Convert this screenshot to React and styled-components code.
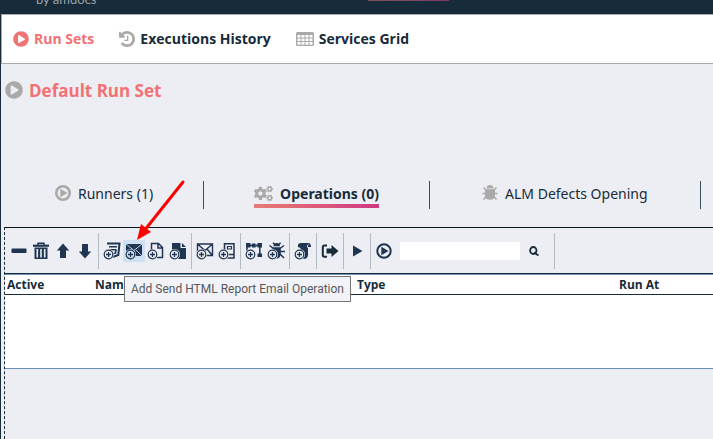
import React from "react";
import styled, { createGlobalStyle, css } from "styled-components";
import { FaPlayCircle, FaCogs } from "react-icons/fa";

const ink = "#172b3a";
const navy = "#1f3552";
const coral = "#f27173";
const haze = "#edeef3";
const grey = "#a9a9a9";

const GlobalStyle = createGlobalStyle`
  * { box-sizing: border-box; }
  body {
    margin: 0;
    background: ${haze};
    color: ${ink};
    font-family: "Open Sans", "Noto Sans", sans-serif;
  }
  button, input { font: inherit; color: inherit; border: 0; padding: 0; }
`;

const Page = styled.div`
  position: relative;
  display: flex;
  flex-direction: column;
  min-height: 100vh;
  border-left: 1px solid ${ink};
  overflow: hidden;
`;

const TopBar = styled.header`
  display: flex;
  justify-content: space-between;
  height: 14px;
  padding: 0 264px 0 35px;
  background: ${ink};
  overflow: hidden;
`;

const Byline = styled.span`
  margin-top: -9px;
  color: #9aa3a9;
  font-family: Lato, sans-serif;
  font-size: 13px;
  line-height: 16px;
`;

const ActiveMark = styled.span`
  width: 81px;
  height: 1px;
  background: linear-gradient(90deg, #81525a, #7c3a66);
`;

const MainNav = styled.nav`
  display: flex;
  align-items: center;
  gap: 25px;
  height: 50px;
  padding-left: 11px;
  background: #fff;
  border: 1px solid ${grey};
  border-right: 0;
`;

const NavLink = styled.a`
  display: flex;
  align-items: center;
  gap: 5px;
  color: ${(p) => (p.$active ? coral : ink)};
  font-size: 14px;
  font-weight: 700;
  line-height: 20px;
  text-decoration: none;
  white-space: nowrap;
  svg { color: ${(p) => (p.$active ? coral : grey)}; }
`;

const Title = styled.h1`
  display: flex;
  align-items: center;
  gap: 6px;
  height: 24px;
  margin: 14px 0 79px 4px;
  color: ${coral};
  font-size: 17px;
  font-weight: 700;
  svg { color: ${grey}; }
`;

const Tabs = styled.div`
  display: flex;
  padding-left: 4px;
`;

const Tab = styled.button`
  height: 28px;
  padding: 0 ${(p) => (p.$wide ? 52 : 50)}px;
  background: none;
  border-right: 1px solid #3b4d5b;
  font-family: "Noto Sans", sans-serif;
  font-size: 14px;
  font-weight: ${(p) => (p.$active ? 700 : 400)};
  white-space: nowrap;
  flex: none;
`;

const TabLabel = styled.span`
  display: flex;
  align-items: center;
  gap: 7px;
  height: 26px;
  border-bottom: 4px solid transparent;
  ${(p) =>
    p.$active &&
    css`
      border-image: linear-gradient(90deg, #e87d74, #cf3782) 1;
    `}
  svg { color: ${grey}; }
`;

const Panel = styled.section`
  flex: 1;
  margin: 18px 0 0 3px;
  border-left: 1px dashed ${ink};
`;

const Toolbar = styled.div`
  display: flex;
  align-items: center;
  height: 47px;
  padding-left: 3px;
  border-top: 1px solid #08151d;
  border-bottom: 1px solid ${ink};
`;

const ToolButton = styled.button`
  display: flex;
  align-items: center;
  justify-content: center;
  flex: none;
  width: 22px;
  height: 22px;
  background: ${(p) => (p.$hovered ? "#cfe0f4" : "none")};
  color: ${navy};
`;

const Divider = styled.span`
  flex: none;
  width: 1px;
  height: 36px;
  margin: 0 2px;
  background: #b3bac4;
`;

const SearchGroup = styled.div`
  display: flex;
  align-items: center;
  gap: 3px;
  padding: 0 7px 0 5px;
`;

const SearchInput = styled.input`
  width: 120px;
  height: 18px;
  padding: 0 4px;
  background: #fff;
  font-size: 12px;
`;

const GridFrame = styled.div`
  min-height: 95px;
  background: #fff;
  border-top: 1px solid #6f93bd;
  border-bottom: 1px solid #6a8db3;
`;

const Grid = styled.table`
  width: 100%;
  table-layout: fixed;
  border-spacing: 0;
`;

const HeadCell = styled.th`
  width: ${(p) => p.$width || "auto"};
  height: 20px;
  padding: 0 2px;
  border-bottom: 1px solid ${ink};
  font-size: 12px;
  line-height: 19px;
  text-align: left;
`;

const Tooltip = styled.div`
  position: absolute;
  top: 276px;
  left: 123px;
  padding: 0 6px;
  background: #f2f3f8;
  border: 1px solid #767676;
  color: #575757;
  font-family: Roboto, sans-serif;
  font-size: 12px;
  line-height: 24px;
  white-space: nowrap;
`;

const Pointer = styled.svg`
  position: absolute;
  top: 176px;
  left: 129px;
  pointer-events: none;
`;

const Svg = ({ size = 18, children }) => (
  <svg width={size} height={size} viewBox={`0 0 ${size} ${size}`} fill="currentColor" aria-hidden="true">
    {children}
  </svg>
);

const PlusBadge = ({ halo = haze }) => (
  <g>
    <circle cx="5.5" cy="12.5" r="5.5" fill={halo} />
    <circle cx="5.5" cy="12.5" r="4.3" fill={halo} stroke="currentColor" strokeWidth="1.2" />
    <path d="M5.5 10v5M3 12.5h5" stroke="currentColor" strokeWidth="1.3" />
  </g>
);

const TableIcon = () => (
  <svg width="18" height="14" viewBox="0 0 18 14" aria-hidden="true">
    <rect width="18" height="14" rx="1.500" fill="currentColor" />
    <path
      d="M1.500 3h3v2.500h-3zM5.500 3h3v2.500h-3zM9.500 3h3v2.500h-3zM13.500 3h3v2.500h-3zM1.500 6.500h3V9h-3zM5.500 6.500h3V9h-3zM9.500 6.500h3V9h-3zM13.500 6.500h3V9h-3zM1.500 10h3v2.700h-3zM5.500 10h3v2.700h-3zM9.500 10h3v2.700h-3zM13.500 10h3v2.700h-3z"
      fill="#fff"
    />
  </svg>
);

const HistoryIcon = () => (
  <svg width="16" height="16" viewBox="0 128 1536 1536" fill="currentColor" aria-hidden="true">
    <path d="M1536 896q0 156-61 298t-164 245-245 164-298 61q-172 0-327-72.500t-264-204.500q-7-10-6.500-22.500t8.500-20.500l137-138q10-9 25-9 16 2 23 12 73 95 179 147t225 52q104 0 198.500-40.500t163.500-109.500 109.500-163.500 40.500-198.500-40.500-198.500-109.500-163.500-163.500-109.500-198.500-40.500q-98 0-188 35.500t-160 101.500l137 138q31 30 14 69-17 40-59 40h-448q-26 0-45-19t-19-45v-448q0-42 40-59 39-17 69 14l130 129q107-101 244.500-156.500t284.500-55.500q156 0 298 61t245 164 164 245 61 298zm-640-288v448q0 14-9 23t-23 9h-320q-14 0-23-9t-9-23v-64q0-14 9-23t23-9h224v-352q0-14 9-23t23-9h64q14 0 23 9t9 23z" />
  </svg>
);

const BeetleIcon = () => (
  <svg width="16" height="16" viewBox="0 0 16 16" aria-hidden="true">
    <path d="M4.500 3.600a3.500 3.500 0 0 1 7 0zM3 4.200h10v6c0 3-2 4.600-5 4.600s-5-1.600-5-4.600z" fill="currentColor" />
    <path d="M1.500 2.500l3 3M14.500 2.500l-3 3M.500 8.500h15M4.500 11l-3 3.500M11.500 11l3 3.500" stroke="currentColor" strokeWidth="1.600" />
  </svg>
);

const RingPlay = ({ size = 16, weight = 2 }) => (
  <svg width={size} height={size} viewBox="0 0 16 16" aria-hidden="true">
    <circle cx="8" cy="8" r="6.700" fill="none" stroke="currentColor" strokeWidth={weight} />
    <path d="M5.300 3.800v8.400L12.500 8z" fill="currentColor" />
  </svg>
);

const icons = {
  minus: <Svg><rect x="1.500" y="6.500" width="15" height="4.500" rx=".8" /></Svg>,
  trash: (
    <Svg>
      <path d="M6 3V1.200h6V3" fill="none" stroke="currentColor" strokeWidth="1.400" />
      <path d="M1 2.600h16v2.200H1z" />
      <path d="M2.500 5.500h13V17h-13zM4.500 7v8.500h1.600V7zM8.200 7v8.500h1.600V7zM11.900 7v8.500h1.600V7z" fillRule="evenodd" />
    </Svg>
  ),
  up: <Svg><path d="M9 1.500L15.200 8.500h-3.200V16H6V8.500H2.800z" /></Svg>,
  down: <Svg><path d="M9 16.500L15.200 9.500h-3.200V2H6v7.500H2.800z" /></Svg>,
  html: (
    <Svg>
      <path d="M4 1.500h12.500L15.300 13 9.800 15" fill="none" stroke="currentColor" strokeWidth="2" />
      <path d="M6 4.700h8M6 7.800h7.500M13 7.500l-.5 3.500-3 1" fill="none" stroke="currentColor" strokeWidth="1.600" />
      <PlusBadge />
    </Svg>
  ),
  mailSolid: (
    <Svg>
      <path d="M1 2h16v12H1z" />
      <path d="M1 2l8 6.500L17 2M1 14l6-6M17 14l-6-6" fill="none" stroke="#cfe0f4" strokeWidth=".9" />
      <PlusBadge halo="#cfe0f4" />
    </Svg>
  ),
  page: (
    <Svg>
      <path d="M4.500 9V1.500h7l4 4v10h-6M11 1.500V6h4.500" fill="none" stroke="currentColor" strokeWidth="1.500" />
      <PlusBadge />
    </Svg>
  ),
  pageSolid: (
    <Svg>
      <path d="M3 1h8.500v5H17v11H3zM13 1l4 4h-4z" />
      <PlusBadge />
    </Svg>
  ),
  mail: (
    <Svg>
      <path d="M1.500 2h15v11.500h-15zM1.500 2L9 8.500 16.500 2M16 13l-5-6" fill="none" stroke="currentColor" strokeWidth="1.400" />
      <PlusBadge />
    </Svg>
  ),
  archive: (
    <Svg>
      <path d="M6.500 9V1.700H16V16H9M6 12.500h10" fill="none" stroke="currentColor" strokeWidth="1.500" />
      <path d="M9.500 4.500h4v2.500h-4z" fill="none" stroke="currentColor" strokeWidth="1.200" />
      <PlusBadge />
    </Svg>
  ),
  nodes: (
    <Svg>
      <path d="M1 1h4.500v4.500H1zM7 1.500h3.500v4H7zM12.500 1H17v4.500h-4.500zM12.500 11.500H17V15h-4.500z" />
      <path d="M3 3.500h12" fill="none" stroke="currentColor" strokeWidth="1.800" />
      <path d="M2 5v4M14.800 5v8" fill="none" stroke="currentColor" strokeWidth="1.500" />
      <PlusBadge />
    </Svg>
  ),
  bug: (
    <Svg>
      <path d="M6.500 4.300a3.200 3.200 0 0 1 6.400 0zM5.800 5.200h8v6.300c0 3-1.500 5-4 5s-4-2-4-5z" />
      <path d="M2.500 3.500l4 3M17 3.500l-4 3M12.500 9.500H18M13 12l4 4M7 9.500H1.500M6 .8l2 2M13.600.8l-2 2" fill="none" stroke="currentColor" strokeWidth="1.500" />
      <PlusBadge />
    </Svg>
  ),
  script: (
    <Svg>
      <path d="M4 5C3.500 2.500 4.500 1 7 1h7c2.500 0 3 2 3 4h-3v7.500c0 3-2 4.500-4 4.500H6.500V6z" />
      <path d="M13.500 5.500V4q0-1.300 1-1.500" fill="none" stroke={haze} strokeWidth=".9" />
      <PlusBadge />
    </Svg>
  ),
  exportIcon: (
    <Svg>
      <path d="M6 3.500H3.500Q1.800 3.500 1.800 5v8q0 1.700 1.700 1.700H6" fill="none" stroke={ink} strokeWidth="2" />
      <path d="M5.500 6.500h5V3l7 6-7 6v-3.500h-5z" fill={ink} />
    </Svg>
  ),
  play: <Svg><path d="M5 3.500v11l9.500-5.500z" /></Svg>,
  search: (
    <Svg size={12}>
      <ellipse cx="5.300" cy="5.500" rx="3.200" ry="3.500" fill="none" stroke={ink} strokeWidth="1.800" />
      <path d="M6 7.500l4.500 3" stroke={ink} strokeWidth="1.800" />
    </Svg>
  ),
};

const groups = [
  [
    ["minus", "Remove operation"],
    ["trash", "Delete all operations"],
    ["up", "Move up"],
    ["down", "Move down"],
  ],
  [
    ["html", "Add HTML Report Operation"],
    ["mailSolid", "Add Send HTML Report Email Operation", true],
    ["page", "Add file operation"],
    ["pageSolid", "Add report file operation"],
  ],
  [
    ["mail", "Add send text email operation"],
    ["archive", "Add archive operation"],
  ],
  [
    ["nodes", "Add flow operation"],
    ["bug", "Add defects operation"],
  ],
  [["script", "Add script operation"]],
  [["exportIcon", "Export"]],
  [["play", "Run selected"]],
];

const ToolGroup = ({ tools }) => (
  <>
    {tools.map(([icon, label, hovered]) => (
      <ToolButton key={icon} type="button" aria-label={label} $hovered={hovered}>
        {icons[icon]}
      </ToolButton>
    ))}
    <Divider />
  </>
);

export default function App() {
  return (
    <>
      <GlobalStyle />
      <Page>
        <TopBar>
          <Byline>by amdocs</Byline>
          <ActiveMark />
        </TopBar>
        <MainNav>
          <NavLink href="#run-sets" $active>
            <FaPlayCircle size={16} />
            Run Sets
          </NavLink>
          <NavLink href="#history">
            <HistoryIcon />
            Executions History
          </NavLink>
          <NavLink href="#grid">
            <TableIcon />
            Services Grid
          </NavLink>
        </MainNav>
        <Title>
          <FaPlayCircle size={18} />
          Default Run Set
        </Title>
        <Tabs role="tablist">
          <Tab type="button" role="tab">
            <TabLabel>
              <RingPlay size={16} weight={2.6} />
              Runners (1)
            </TabLabel>
          </Tab>
          <Tab type="button" role="tab" aria-selected="true" $active>
            <TabLabel $active>
              <FaCogs size={19} />
              Operations (0)
            </TabLabel>
          </Tab>
          <Tab type="button" role="tab" $wide>
            <TabLabel>
              <BeetleIcon />
              ALM Defects Opening
            </TabLabel>
          </Tab>
        </Tabs>
        <Panel>
          <Toolbar>
            {groups.map((tools) => (
              <ToolGroup key={tools[0][0]} tools={tools} />
            ))}
            <ToolButton type="button" aria-label="Run set">
              <RingPlay />
            </ToolButton>
            <SearchGroup>
              <SearchInput type="text" aria-label="Search operations" />
              <ToolButton type="button" aria-label="Search">
                {icons.search}
              </ToolButton>
            </SearchGroup>
            <Divider />
          </Toolbar>
          <GridFrame>
            <Grid>
              <thead>
                <tr>
                  <HeadCell $width="88px">Active</HeadCell>
                  <HeadCell $width="262px">Name</HeadCell>
                  <HeadCell $width="262px">Type</HeadCell>
                  <HeadCell>Run At</HeadCell>
                </tr>
              </thead>
            </Grid>
          </GridFrame>
        </Panel>
        <Tooltip role="tooltip">Add Send HTML Report Email Operation</Tooltip>
        <Pointer width="60" height="68" viewBox="0 0 60 68" aria-hidden="true">
          <path d="M53 6L14 55" stroke="#f00" strokeWidth="3" strokeLinecap="round" />
          <path d="M7 64l4-16 10 8z" fill="#f00" />
        </Pointer>
      </Page>
    </>
  );
}
